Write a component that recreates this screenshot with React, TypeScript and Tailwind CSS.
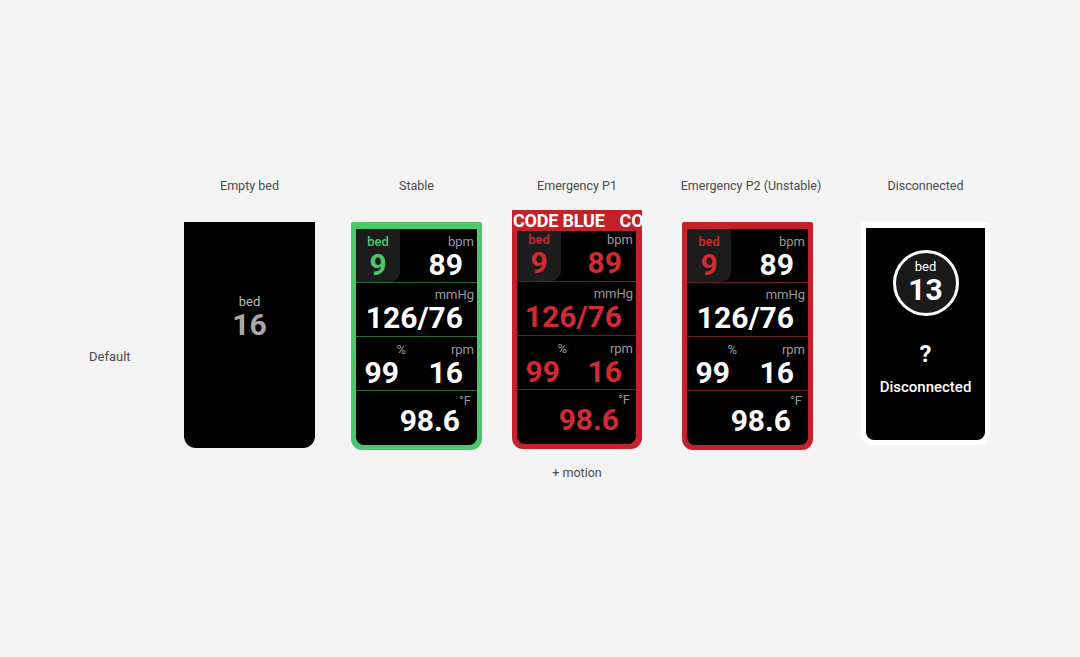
import React from 'react';

type Theme = {
  frame: string;
  divider: string;
  bed: string;
  value: string;
};

const stableTheme: Theme = {
  frame: 'bg-[#4bc76c]',
  divider: 'border-[#2c6b3c]',
  bed: 'text-[#4bc76c]',
  value: 'text-white',
};

const p1Theme: Theme = {
  frame: 'bg-[#c3222b]',
  divider: 'border-[#6e1a1f]',
  bed: 'text-[#d02a33]',
  value: 'text-[#d02a33]',
};

const p2Theme: Theme = {
  frame: 'bg-[#c3222b]',
  divider: 'border-[#6e1a1f]',
  bed: 'text-[#d02a33]',
  value: 'text-white',
};

const unit = 'text-[13px] leading-4 text-[#9a9a9a]';
const big = 'text-[30px] leading-[30px] font-bold';

const VitalsBody = ({ theme, firstRow = 'h-[54px]', firstPad = 'pt-[5px]' }: { theme: Theme; firstRow?: string; firstPad?: string }) => {
  return (
    <div className="bg-black rounded-b-[8px] overflow-hidden flex flex-col">
      <div className={`flex border-b ${firstRow} ${theme.divider}`}>
        <div className={`w-[44px] bg-[#1c1c1c] rounded-br-[10px] flex flex-col items-center ${firstPad}`}>
          <span className={`text-[13px] leading-4 font-medium ${theme.bed}`}>bed</span>
          <span className={`${big} ${theme.bed}`}>9</span>
        </div>
        <div className={`flex-1 flex flex-col items-end ${firstPad}`}>
          <span className={`${unit} pr-[3px]`}>bpm</span>
          <span className={`${big} ${theme.value} pr-[14px]`}>89</span>
        </div>
      </div>
      <div className={`flex flex-col items-end h-[54px] pt-[4px] border-b ${theme.divider}`}>
        <span className={`${unit} pr-[3px]`}>mmHg</span>
        <span className={`${big} ${theme.value} pr-[14px]`}>126/76</span>
      </div>
      <div className={`flex h-[54px] pt-[5px] border-b ${theme.divider}`}>
        <div className="w-[60px] flex flex-col items-end">
          <span className={`${unit} pr-[10px]`}>%</span>
          <span className={`${big} ${theme.value} pr-[17px]`}>99</span>
        </div>
        <div className="flex-1 flex flex-col items-end">
          <span className={`${unit} pr-[3px]`}>rpm</span>
          <span className={`${big} ${theme.value} pr-[14px]`}>16</span>
        </div>
      </div>
      <div className="flex flex-col items-end h-[54px] pt-[2px]">
        <span className={`${unit} pr-[6px]`}>°F</span>
        <span className={`${big} ${theme.value} pr-[17px] -mt-[3px]`}>98.6</span>
      </div>
    </div>
  );
};

const Label = ({ children, className = '' }: { children: React.ReactNode; className?: string }) => (
  <span className={`text-[12.5px] leading-4 text-[#4a4a4a] whitespace-nowrap ${className}`}>{children}</span>
);

export default function App() {
  return (
    <div className="w-[1080px] h-[657px] bg-[#f4f4f4] flex pt-[178px] pl-[89px]" style={{ fontFamily: 'Roboto, "Noto Sans", sans-serif' }}>
      <div className="w-[95px] pt-[166px]">
        <span className="text-[13px] leading-4 text-[#4a4a4a]">Default</span>
      </div>

      {/* Empty bed */}
      <div className="w-[131px] flex flex-col items-center">
        <Label>Empty bed</Label>
        <div className="mt-[28px] w-[131px] h-[226px] bg-black rounded-b-[12px] flex flex-col items-center pt-[72px]">
          <span className="text-[13px] leading-4 text-[#bdbdbd]">bed</span>
          <span className="text-[30px] leading-[30px] font-bold text-[#a9a9a9]">16</span>
        </div>
      </div>

      {/* Stable */}
      <div className="ml-[36px] w-[131px] flex flex-col items-center">
        <Label>Stable</Label>
        <div className={`mt-[28px] w-[131px] px-[5px] pt-[7px] pb-[5px] rounded-t-[2px] rounded-b-[11px] ${stableTheme.frame}`}>
          <VitalsBody theme={stableTheme} />
        </div>
      </div>

      {/* Emergency P1 */}
      <div className="ml-[30px] w-[130px] flex flex-col items-center">
        <Label>Emergency P1</Label>
        <div className={`mt-[16px] w-[130px] pl-[5px] pr-[6px] pb-[5px] rounded-b-[11px] ${p1Theme.frame}`}>
          <div className="-ml-[5px] -mr-[6px] h-[21px] overflow-hidden whitespace-nowrap text-white font-bold text-[18px] leading-[22px] pl-px tracking-[-0.2px]">
            <span className="mr-[15px]">CODE BLUE</span>
            <span>CODE BLUE</span>
          </div>
          <VitalsBody theme={p1Theme} firstRow="h-[51px]" firstPad="pt-[1px]" />
        </div>
        <span className="mt-[16px] text-[12.5px] leading-4 text-[#4a4a4a]">+ motion</span>
      </div>

      {/* Emergency P2 */}
      <div className="ml-[40px] w-[131px] flex flex-col items-center">
        <Label className="pl-[7px]">Emergency P2 (Unstable)</Label>
        <div className={`mt-[28px] w-[131px] px-[5px] pt-[7px] pb-[5px] rounded-t-[2px] rounded-b-[11px] ${p2Theme.frame}`}>
          <VitalsBody theme={p2Theme} />
        </div>
      </div>

      {/* Disconnected */}
      <div className="ml-[48px] w-[129px] flex flex-col items-center">
        <Label>Disconnected</Label>
        <div className="mt-[28px] w-[129px] bg-white px-[5px] pt-[6px] pb-[5px] rounded-t-[3px] rounded-b-[11px]">
          <div className="h-[212px] bg-black rounded-b-[8px] flex flex-col items-center">
            <div className="mt-[22px] w-[66px] h-[66px] rounded-full border-[3px] border-white bg-[#1a1a1a] flex flex-col items-center pt-[6px]">
              <span className="text-[13px] leading-4 text-white">bed</span>
              <span className="text-[30px] leading-[30px] font-bold text-white">13</span>
            </div>
            <span className="mt-[24px] text-[24px] leading-[28px] font-bold text-white">?</span>
            <span className="mt-[9px] text-[15px] leading-5 font-medium text-white">Disconnected</span>
          </div>
        </div>
      </div>
    </div>
  );
}
